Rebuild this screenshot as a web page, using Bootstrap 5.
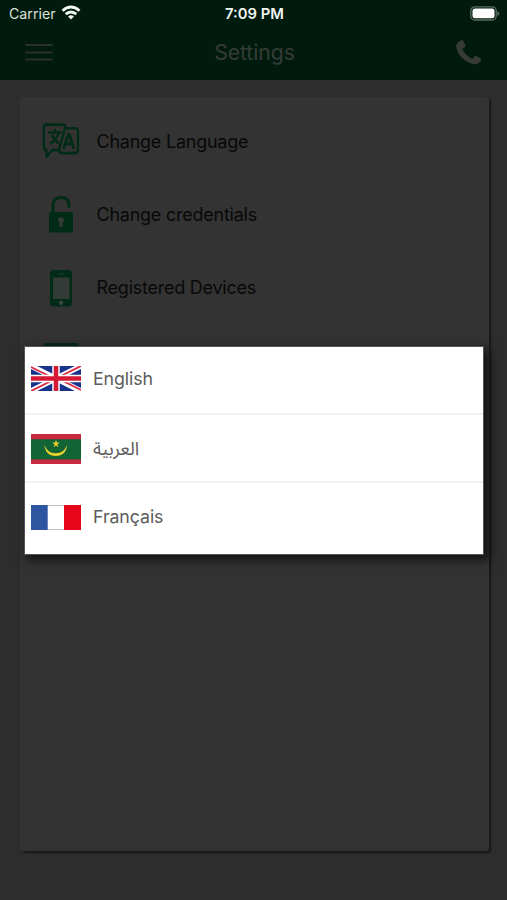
<!DOCTYPE html>
<html lang="en">
<head>
<meta charset="utf-8">
<meta name="viewport" content="width=device-width, initial-scale=1">
<title>Settings</title>
<link href="https://cdn.jsdelivr.net/npm/bootstrap@5.3.0/dist/css/bootstrap.min.css" rel="stylesheet">
<style>
body{background:#2d2d2d;font-family:Inter,"Liberation Sans",sans-serif;color:#080808}
.screen{height:900px;overflow:hidden}
.top-area{background:#001b0d;height:79.5px}
.status{height:27px;padding:0 7px 0 9px;font-size:14.2px;color:#d9e2dc}
.status .clock{font-weight:600;font-size:14.8px;color:#f0f5f2;padding-top:2px}
.title-bar{height:50px;padding:0 26px 0 25px}
.title-bar h1{font-size:21.2px;font-weight:400;color:#363b38;letter-spacing:-.05px;margin-top:1px}
.panel{margin:17.5px 18px 0 20px;padding-top:7.5px;height:754px;background:#333;border-radius:3px;box-shadow:2px 2px 2px #181818}
.setting{height:73.3px;padding-left:20px;font-size:18px;letter-spacing:-.24px}
.setting svg{width:42px;margin-right:14.5px;flex:none}
.lang-dialog{left:25px;top:347px;width:458px;height:207px;background:#fff;box-shadow:0 0 0 1px #555,4px 4px 10px 2px #111}
.lang{padding-left:6px;font-size:17.8px;color:#5c5c5c;letter-spacing:-.1px}
.lang svg{width:50px;margin-right:12px;flex:none}
.lang+.lang{border-top:2px solid #f2f2f2}
.lang-en{height:65.5px;padding-bottom:2px}
.lang-en span{padding-top:2px}
.lang-ar{height:68.5px;padding-top:2px}
.lang-fr{padding-bottom:2px}
.arabic{font-family:"Noto Sans Arabic","DejaVu Sans",sans-serif;font-size:18.4px;letter-spacing:0;padding-top:3px}
</style>
</head>
<body>
<div class="screen position-relative">
<header class="top-area">
  <div class="status d-flex align-items-center">
    <div class="col d-flex align-items-center"><span>Carrier</span>
      <svg class="ms-1" width="22" height="16" viewBox="0 0 22 16" fill="none" stroke="#f3f7f5" stroke-width="2.8"><path d="M2.500 5.700Q11-1.600 19.500 5.700M5.700 9.200Q11 4.800 16.300 9.200"/><path d="M11 14.400 8 11.400Q11 9 14 11.400Z" fill="#f3f7f5" stroke="none"/></svg>
    </div>
    <span class="clock">7:09 PM</span>
    <div class="col d-flex justify-content-end">
      <svg width="31" height="15" viewBox="0 0 31 15"><rect x="1.800" y=".8" width="25.400" height="13.200" rx="4" fill="none" stroke="#5c6d64" stroke-width="1.300"/><rect x="3.500" y="2.500" width="22" height="9.800" rx="2.500" fill="#fff"/><path d="M28.400 5v5q2-1 2-2.500T28.400 5Z" fill="#5c6d64"/></svg>
    </div>
  </div>
  <div class="title-bar d-flex justify-content-between align-items-center">
    <svg width="28" height="18" viewBox="0 0 28 18" stroke="#2a312d" stroke-width="2"><path d="M.5 2h27M.5 9.500h27M.5 16.500h27"/></svg>
    <h1 class="mb-0">Settings</h1>
    <svg width="25" height="25" viewBox="0 0 25 25" fill="#363b38"><path d="M4.800.4c1-.7 2.300-.3 2.800.8l1.700 3.700c.5 1 .1 2.100-.8 2.600L6.400 8.800c.5 2 2 4.200 4.200 6.300 2 2 4 3.300 6 3.900l1.300-2c.6-.9 1.800-1.200 2.800-.7l3.400 2c1 .6 1.200 1.900.5 2.800-1.300 1.900-3 3.200-5.300 3.200-4.400 0-9.200-2.400-13-6.200C2.400 14.200.2 9.700.2 5.700.2 3.300 2.400 1.700 4.800.4Z"/></svg>
  </div>
</header>

<main class="panel">
  <div class="setting d-flex align-items-center">
    <svg height="40" viewBox="0 2.500 42 33" preserveAspectRatio="none" fill="none" stroke="#002b17" stroke-width="2.200" stroke-linejoin="round"><path d="M20.500 26.500H12L6.500 32v-5.500Q3.800 26.500 3.800 23V8.200q0-2.700 2.700-2.700h17q2 0 2 2.500"/><path d="M25 8.500h10q3 0 3 3V26q0 3-3 3H22q-2.500 0-3-3Z"/><path d="M8.500 12h13M15 9v3M19 12q-3 7-9 9M12 14q3 5 7 7"/><path d="m23.500 25.500 4.800-12h.9l4.800 12M25.500 21.500h6.500" stroke-width="2.600"/></svg>
    <span>Change Language</span>
  </div>
  <div class="setting d-flex align-items-center">
    <svg height="40" viewBox="0 0 42 40"><path d="M13 18v-7q0-7.500 8-7.500t8 7.500V14" fill="none" stroke="#002b17" stroke-width="3"/><rect x="9" y="18" width="24" height="20.500" rx="1.500" fill="#002b17"/><path d="M21 23a3 3 0 0 1 1.600 5.500V33h-3.200v-4.500A3 3 0 0 1 21 23Z" fill="#333b36"/></svg>
    <span>Change credentials</span>
  </div>
  <div class="setting d-flex align-items-center">
    <svg height="40" viewBox="0 0 42 40"><rect x="10" y="2" width="22" height="36.500" rx="3.500" fill="#002b17"/><path d="M13 9.500h16.500V31H13Z" fill="#343a37"/><path d="M18 6h6" stroke="#263b30"/><circle cx="21" cy="34.800" r="2.200" fill="#3b443f"/></svg>
    <span>Registered Devices</span>
  </div>
  <div class="setting d-flex align-items-center">
    <svg height="36" viewBox="0 0 42 36" fill="none" stroke="#002b17" stroke-width="3"><rect x="4.500" y="1.500" width="33" height="33" rx="2"/></svg>
  </div>
</main>

<div class="lang-dialog position-absolute d-flex flex-column" role="dialog" aria-label="Language">
  <div class="lang lang-en d-flex align-items-center">
    <svg height="25" viewBox="0 0 50 25"><path fill="#17328b" d="M0 0h50v25H0Z"/><path d="m0 0 50 25M50 0 0 25" stroke="#fff" stroke-width="5.500"/><path d="m0 1 22 11M50 24 28 13M50 0 28 11M0 25l22-11" stroke="#d92742" stroke-width="1.900"/><path d="M25 0v25M0 12.500h50" stroke="#fff" stroke-width="7.500"/><path d="M25 0v25M0 12.500h50" stroke="#d51935" stroke-width="4.500"/></svg>
    <span>English</span>
  </div>
  <div class="lang lang-ar d-flex align-items-center">
    <svg height="30" viewBox="0 0 50 30"><path fill="#c82840" d="M0 0h50v30H0Z"/><path fill="#116434" d="M0 5.300h50v20.200H0Z"/><path fill="#ead22c" d="M13.500 10.500c0 7 4.500 11.500 11.300 11.500S36 17.500 36 10.500c-1.500 5.700-5.700 8.700-11.200 8.700S15 16.200 13.500 10.500ZM25 6l.9 2.600h2.800l-2.200 1.700.8 2.700-2.300-1.600-2.300 1.600.8-2.700-2.200-1.700h2.800Z"/></svg>
    <span class="arabic" lang="ar">العربية</span>
  </div>
  <div class="lang lang-fr d-flex align-items-center flex-fill">
    <svg height="25" viewBox="0 0 50 25"><path fill="#fff" stroke="#bbb" d="M.5.500h49v24H.5Z"/><path fill="#2d55a0" d="M0 0h16.700v25H0Z"/><path fill="#e50619" d="M33 0h17v25H33Z"/></svg>
    <span>Français</span>
  </div>
</div>
</div>
<script src="https://cdn.jsdelivr.net/npm/bootstrap@5.3.0/dist/js/bootstrap.bundle.min.js"></script>
</body>
</html>
